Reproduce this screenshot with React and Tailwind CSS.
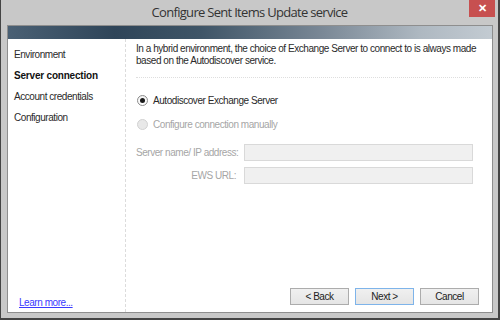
import { useState } from "react";

const navItems = [
  "Environment",
  "Server connection",
  "Account credentials",
  "Configuration",
];

function Radio({ checked, disabled }) {
  return (
    <span
      className={
        "w-[11px] h-[11px] rounded-full border flex items-center justify-center shrink-0 " +
        (disabled
          ? "border-[#d2d2d2] bg-[#e8e8e8]"
          : "border-[#8b8b8b] bg-gradient-to-b from-[#f2f2f2] to-[#ffffff]")
      }
    >
      {checked && <span className="w-[5px] h-[5px] rounded-full bg-[#1a1a1a]" />}
    </span>
  );
}

function Field({ label }) {
  return (
    <div className="flex items-center h-[17px]">
      <span className="w-[108px] text-right text-[#a6a6a6] pr-[8px] whitespace-nowrap">
        {label}
      </span>
      <div className="w-[229px] h-[17px] bg-[#f0f0f0] border border-[#d9d9d9]" />
    </div>
  );
}

function WizardButton({ children, focused }) {
  return (
    <button
      className={
        "w-[59px] h-[17px] border bg-gradient-to-b from-[#f0f0f0] to-[#e5e5e5] text-[#222] leading-none " +
        (focused ? "border-[#7eb4ea]" : "border-[#acacac]")
      }
    >
      {children}
    </button>
  );
}

export default function App() {
  const [mode] = useState("auto");

  return (
    <div className="w-[500px] h-[320px] flex flex-col bg-[#c8c8c8] border-l border-r-2 border-b-2 border-[#444] font-['Liberation_Sans',Arial,sans-serif] text-[10px] tracking-[-0.45px] text-[#2a2a2a] overflow-hidden">
      {/* title bar */}
      <div className="relative h-[25px] shrink-0 flex items-center justify-center">
        <span className="text-[13px] text-[#333] font-['Open_Sans',sans-serif] tracking-[-0.7px]">
          Configure Sent Items Update service
        </span>
        <div className="absolute right-[3px] top-0 w-[26px] h-[17px] bg-[#c75050] flex items-center justify-center text-white text-[11px] font-bold leading-none tracking-normal">
          ✕
        </div>
      </div>

      {/* client area */}
      <div className="flex-1 flex flex-col ml-[6px] mr-[5px] mb-[5px] border border-[#8e8e8e]">
        <div className="h-[13px] shrink-0 bg-[linear-gradient(90deg,#4a6074_0%,#2f4559_22%,#3f5567_40%,#7a8896_65%,#aeb8c1_85%,#c3cbd2_100%)]" />

        <div className="flex-1 flex bg-white">
          {/* left nav */}
          <div className="w-[118px] shrink-0 flex flex-col border-r border-dashed border-[#dcdcdc] pt-[5px] pl-[6px] pb-[3px]">
            {navItems.map((item) => (
              <div
                key={item}
                className={
                  "h-[21px] flex items-center " +
                  (item === "Server connection"
                    ? "font-bold text-[#111] tracking-[-0.2px]"
                    : "")
                }
              >
                {item}
              </div>
            ))}
            <a className="mt-auto ml-[5px] text-[#3a3aff] underline leading-[12px]">
              Learn more...
            </a>
          </div>

          {/* right content */}
          <div className="flex-1 flex flex-col pl-[10px] pr-[10px] pt-[4px] pb-[7px]">
            <p className="leading-[12px]">
              In a hybrid environment, the choice of Exchange Server to connect to is always made based on the Autodiscover service.
            </p>
            <div className="mt-[10px] border-t border-dotted border-[#dedede]" />

            <div className="flex flex-col gap-[13px] mt-[17px] pl-[1px]">
              <label className="flex items-center gap-[5px] h-[11px]">
                <Radio checked={mode === "auto"} />
                <span>Autodiscover Exchange Server</span>
              </label>
              <label className="flex items-center gap-[5px] h-[11px] text-[#a6a6a6]">
                <Radio disabled />
                <span>Configure connection manually</span>
              </label>
            </div>

            <div className="flex flex-col gap-[6px] mt-[14px]">
              <Field label="Server name/ IP address:" />
              <Field label="EWS URL:" />
            </div>

            <div className="mt-auto flex justify-end gap-[6px] pr-[3px]">
              <WizardButton>&lt; Back</WizardButton>
              <WizardButton focused>Next &gt;</WizardButton>
              <WizardButton>Cancel</WizardButton>
            </div>
          </div>
        </div>
      </div>
    </div>
  );
}
